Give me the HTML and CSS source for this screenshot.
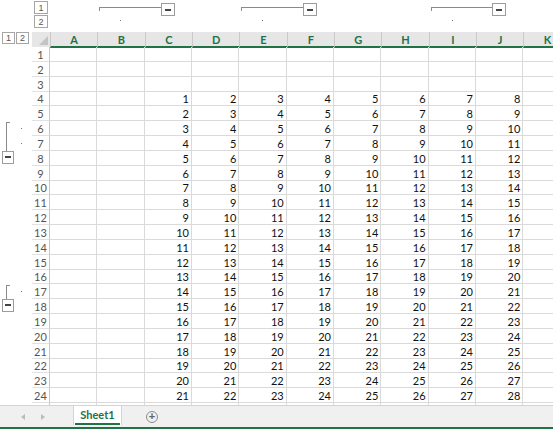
FILE: index.html
```html
<!DOCTYPE html>
<html lang="en">
<head>
	<meta charset="UTF-8">
	<title>Sheet1</title>
	<link rel="stylesheet" href="styles.css">
</head>
<body>
	<div class="main">
		<!-- column outline: level buttons, brackets, detail dots -->
		<div class="col-outline">
			<div class="lvl-cell c3 r1"><span class="obtn">1</span></div>
			<div class="lvl-cell c3 r2"><span class="obtn">2</span></div>

			<div class="cbracket r1 g1"><span class="cline"></span><span class="minus"><i></i></span></div>
			<div class="cbracket r1 g2"><span class="cline"></span><span class="minus"><i></i></span></div>
			<div class="cbracket r1 g3"><span class="cline"></span><span class="minus"><i></i></span></div>

			<div class="cdot r2 cB"><i></i></div>
			<div class="cdot r2 cE"><i></i></div>
			<div class="cdot r2 cI"><i></i></div>
		</div>

		<div class="body">
			<!-- row outline -->
			<div class="row-outline">
				<div class="rlvl rl1"><span class="obtn">1</span></div>
				<div class="rlvl rl2"><span class="obtn">2</span></div>

				<div class="rbracket rg1"><span class="rline"></span><span class="minus"><i></i></span></div>
				<div class="rbracket rg2"><span class="rline"></span><span class="minus"><i></i></span></div>

				<div class="rdot rd6"><i></i></div>
				<div class="rdot rd7"><i></i></div>
				<div class="rdot rd17"><i></i></div>
			</div>

			<div class="grid" id="grid">
				<div class="hdr">
					<div class="corner"><span class="tri"></span></div>
					<div class="ch">A</div>
					<div class="ch">B</div>
					<div class="ch">C</div>
					<div class="ch">D</div>
					<div class="ch">E</div>
					<div class="ch">F</div>
					<div class="ch">G</div>
					<div class="ch">H</div>
					<div class="ch">I</div>
					<div class="ch">J</div>
					<div class="ch">K</div>
				</div>
			</div>
		</div>
	</div>

	<div class="tabbar">
		<div class="nav">
			<span class="arr left"></span>
			<span class="arr right"></span>
		</div>
		<div class="tab"><span>Sheet1</span></div>
		<div class="add"><span class="plus">+</span></div>
	</div>
	<div class="status"></div>

	<script type="text/javascript">
		// rows 1..25, numbers start in row 4, columns C..J
		var grid = document.getElementById('grid');
		for (var r = 1; r <= 25; r++) {
			var row = document.createElement('div');
			row.className = 'row';
			var h = document.createElement('div');
			h.className = 'rh';
			h.textContent = r;
			row.appendChild(h);
			for (var c = 0; c < 11; c++) {
				var cell = document.createElement('div');
				cell.className = 'cell';
				if (r >= 4 && c >= 2 && c <= 9) {
					cell.textContent = (r - 3) + (c - 2);
				}
				row.appendChild(cell);
			}
			grid.appendChild(row);
		}
	</script>
</body>
</html>
```

FILE: styles.css
```css
*{
	margin:0;
	padding:0;
	box-sizing:border-box;
}
body{
	width:553px;
	height:429px;
	overflow:hidden;
	background:#fff;
	font-family:"Lato","Liberation Sans",sans-serif;
	font-size:11px;
	color:#222;
}
.main{
	height:405px;
	overflow:hidden;
	display:flex;
	flex-direction:column;
}

/* outline buttons */
.obtn{
	display:flex;
	align-items:center;
	justify-content:center;
	width:14px;
	height:13px;
	border:1px solid #a6a6a6;
	background:#fff;
	color:#555;
	font-family:"Liberation Sans",sans-serif;
	font-size:9px;
}
.minus{
	display:flex;
	align-items:center;
	justify-content:center;
	flex:none;
	width:14px;
	height:13px;
	border:1px solid #9c9c9c;
	background:#fff;
}
.minus i{
	display:block;
	width:6px;
	height:2px;
	background:#444;
}

/* column outline */
.col-outline{
	flex:none;
	height:32px;
	display:grid;
	grid-template-columns:16px 16px 18px repeat(11,47.33px);
	grid-template-rows:15px 17px;
}
.r1{grid-row:1;}
.r2{grid-row:2;}
.c3{grid-column:3;}
.lvl-cell{
	display:flex;
	justify-content:center;
	align-items:flex-start;
}
.lvl-cell.r1{padding-top:1px;}
.cbracket{
	display:flex;
	align-items:flex-start;
	padding:0 17px 0 2px;
}
.g1{grid-column:5 / 7;}
.g2{grid-column:8 / 10;}
.g3{grid-column:12 / 14;}
.cline{
	flex:1;
	margin-top:7px;
	height:4px;
	border-top:1px solid #8a8a8a;
	border-left:1px solid #8a8a8a;
}
.cbracket .minus{margin-top:3px;}
.cdot{
	display:flex;
	justify-content:center;
	padding-top:5px;
}
.cdot i,
.rdot i{
	display:block;
	width:1px;
	height:1px;
	background:#777;
}
.cB{grid-column:5;}
.cE{grid-column:8;}
.cI{grid-column:12;}

/* row outline + sheet */
.body{
	display:flex;
	flex:1;
}
.row-outline{
	flex:none;
	width:32px;
	display:grid;
	grid-template-columns:16px 16px;
	grid-template-rows:15px repeat(25,14.83px);
}
.rlvl{
	grid-row:1;
	display:flex;
	align-items:flex-start;
}
.rl1{grid-column:1;padding-left:2px;}
.rl2{grid-column:2;}
.rlvl .obtn{width:13px;height:12px;}
.rbracket{
	grid-column:1;
	display:flex;
	flex-direction:column;
	padding:1px 0 2px 2px;
}
.rg1{grid-row:7 / 10;}
.rg2{grid-row:18 / 20;}
.rline{
	flex:1;
	margin-left:4px;
	width:4px;
	border-left:1px solid #8a8a8a;
	border-top:1px solid #8a8a8a;
}
.rbracket .minus{width:12px;}
.rdot{
	grid-column:2;
	display:flex;
	align-items:center;
	padding-left:5px;
}
.rd6{grid-row:7;}
.rd7{grid-row:8;}
.rd17{grid-row:18;}

.grid{
	flex:1;
	overflow:hidden;
}
.hdr,
.row{
	display:grid;
	grid-template-columns:18px repeat(11,47.33px);
}
.hdr{
	height:15px;
	background:#e6e6e6;
}
.corner{
	position:relative;
}
.corner .tri{
	position:absolute;
	right:2px;
	bottom:3px;
	width:0;
	height:0;
	border-left:9px solid transparent;
	border-bottom:9px solid #c4c4c4;
}
.ch{
	display:flex;
	align-items:center;
	justify-content:center;
	border-left:1px solid #cacaca;
	border-bottom:2px solid #217346;
	color:#217346;
	font-weight:bold;
	font-size:11px;
	padding-top:1px;
}
.row{
	height:14.83px;
}
.rh{
	display:flex;
	align-items:center;
	justify-content:center;
	border-bottom:1px solid #e1e1e1;
	border-right:1px solid #c6c6c6;
	color:#555;
	padding-top:1px;
}
.cell{
	display:flex;
	align-items:center;
	justify-content:flex-end;
	padding:1px 2px 0 0;
	border-bottom:1px solid #dadada;
	border-right:1px solid #dadada;
	color:#111;
}

/* sheet tabs */
.tabbar{
	height:22px;
	display:flex;
	background:#f0f0f0;
	border-top:1px solid #d4d4d4;
}
.nav{
	width:73px;
	display:flex;
	align-items:center;
	padding-left:21px;
	gap:16px;
}
.arr{
	width:0;
	height:0;
	border-top:3px solid transparent;
	border-bottom:3px solid transparent;
}
.arr.left{border-right:4px solid #bcbcbc;}
.arr.right{border-left:4px solid #bcbcbc;}
.tab{
	width:49px;
	margin-bottom:2px;
	background:#fff;
	border-left:1px solid #d4d4d4;
	border-right:1px solid #d4d4d4;
	display:flex;
	justify-content:center;
	align-items:stretch;
	padding:0 1px;
}
.tab span{
	flex:1;
	display:flex;
	align-items:center;
	justify-content:center;
	border-bottom:2px solid #217346;
	color:#217346;
	font-weight:bold;
	font-size:11px;
}
.add{
	display:flex;
	align-items:center;
	padding-left:24px;
}
.plus{
	display:flex;
	align-items:center;
	justify-content:center;
	width:12px;
	height:12px;
	border:1px solid #8c8c8c;
	border-radius:50%;
	color:#666;
	font-family:"Liberation Sans",sans-serif;
	font-size:11px;
	font-weight:bold;
	line-height:1;
}
.status{
	height:2px;
	background:#217346;
}
```
